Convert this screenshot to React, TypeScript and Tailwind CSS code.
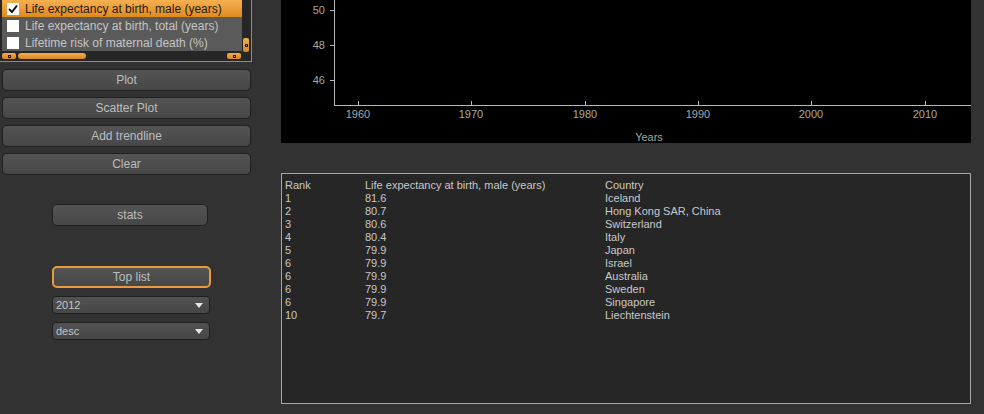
import React from 'react'

const indicators = [
  { name: 'Life expectancy at birth, male (years)', checked: true },
  { name: 'Life expectancy at birth, total (years)', checked: false },
  { name: 'Lifetime risk of maternal death (%)', checked: false },
]

const actions = ['Plot', 'Scatter Plot', 'Add trendline', 'Clear']

const ranking = [
  ['1', '81.6', 'Iceland'],
  ['2', '80.7', 'Hong Kong SAR, China'],
  ['3', '80.6', 'Switzerland'],
  ['4', '80.4', 'Italy'],
  ['5', '79.9', 'Japan'],
  ['6', '79.9', 'Israel'],
  ['6', '79.9', 'Australia'],
  ['6', '79.9', 'Sweden'],
  ['6', '79.9', 'Singapore'],
  ['10', '79.7', 'Liechtenstein'],
]

const yTicks = [
  { label: '50', y: 10 },
  { label: '48', y: 45 },
  { label: '46', y: 80 },
]

const xTicks = [
  { label: '1960', x: 77 },
  { label: '1970', x: 190 },
  { label: '1980', x: 304 },
  { label: '1990', x: 417 },
  { label: '2000', x: 530 },
  { label: '2010', x: 644 },
]

function Grip({ className }: { className: string }) {
  return (
    <div className={`flex items-center justify-center rounded-[2px] bg-gradient-to-b from-[#f4ad4c] to-[#d9861c] ${className}`}>
      <div className="h-[3px] w-[3px] border border-[#1a1a1a]" />
    </div>
  )
}

function Button({ label, className = '' }: { label: string; className?: string }) {
  return (
    <button className={`flex h-[22px] items-center justify-center rounded-[5px] border border-[#1f1f1f] bg-gradient-to-b from-[#545454] to-[#474747] text-[12px] text-[#bdbdbd] ${className}`}>
      {label}
    </button>
  )
}

function Combo({ value }: { value: string }) {
  return (
    <div className="flex h-[18px] w-[158px] items-center justify-between rounded-[4px] border border-[#1f1f1f] bg-gradient-to-b from-[#525252] to-[#464646] pl-[3px] pr-[6px] text-[11px] text-[#c4c4c4]">
      <span>{value}</span>
      <svg width="8" height="5" viewBox="0 0 8 5">
        <path d="M0 0 L8 0 L4 5 Z" fill="#e6e6e6" />
      </svg>
    </div>
  )
}

export default function App() {
  return (
    <div
      className="flex h-[414px] w-[984px] overflow-hidden bg-[#323232]"
      style={{ fontFamily: '"Liberation Sans", Arial, sans-serif' }}
    >
      {/* left controls */}
      <div className="flex w-[252px] flex-col">
        <div className="flex h-[62px] border-r border-b border-[#8c8c8c] bg-[#262626] pl-[2px] pr-[1px]">
          <div className="flex flex-1 flex-col">
            <div className="flex flex-col bg-[#5a5a5a]">
              {indicators.map((it) => (
                <div
                  key={it.name}
                  className={`flex h-[17px] items-center gap-[6px] pl-[5px] text-[12px] ${
                    it.checked
                      ? 'bg-gradient-to-b from-[#f6b050] to-[#e08a1c] text-[#1c1c1c]'
                      : 'text-[#c4c4c4]'
                  }`}
                >
                  <div className="flex h-[12px] w-[12px] items-center justify-center bg-white">
                    {it.checked && (
                      <svg width="10" height="10" viewBox="0 0 10 10">
                        <path d="M1 5 L4 8 L9 1.5" stroke="#111" strokeWidth="2" fill="none" />
                      </svg>
                    )}
                  </div>
                  <span>{it.name}</span>
                </div>
              ))}
            </div>
            <div className="mt-[2px] flex h-[6px] items-center gap-[2px] pr-[1px]">
              <Grip className="h-[6px] w-[14px]" />
              <div className="h-[6px] w-[68px] rounded-[3px] bg-gradient-to-b from-[#f4ad4c] to-[#d9861c]" />
              <div className="flex-1" />
              <Grip className="h-[6px] w-[14px]" />
            </div>
          </div>
          <div className="ml-[1px] flex w-[7px] flex-col justify-end pb-[9px]">
            <Grip className="h-[14px] w-[6px]" />
          </div>
        </div>

        <div className="mt-[7px] flex flex-col gap-[6px] pl-[2px] pr-[1px]">
          {actions.map((a) => (
            <Button key={a} label={a} />
          ))}
        </div>

        <div className="mt-[29px] flex flex-col pl-[52px]">
          <Button label="stats" className="w-[156px]" />
          <button className="mt-[40px] flex h-[22px] w-[159px] items-center justify-center rounded-[5px] border-2 border-[#e89a3c] bg-gradient-to-b from-[#545454] to-[#474747] text-[12px] text-[#bdbdbd]">
            Top list
          </button>
          <div className="mt-[8px] flex flex-col gap-[8px]">
            <Combo value="2012" />
            <Combo value="desc" />
          </div>
        </div>
      </div>

      {/* right: chart + table */}
      <div className="ml-[29px] flex w-[690px] flex-col">
        <div className="h-[143px] bg-black">
          <svg width="690" height="143" className="block">
            <line x1="53.5" y1="0" x2="53.5" y2="105.5" stroke="#b8b8b8" />
            <line x1="53" y1="105.5" x2="690" y2="105.5" stroke="#b8b8b8" />
            {yTicks.map((t) => (
              <g key={t.label}>
                <line x1="49" y1={t.y + 0.5} x2="53" y2={t.y + 0.5} stroke="#b8b8b8" />
                <text x="44" y={t.y + 4} fill="#a8a8a8" fontSize="11" textAnchor="end" fontFamily="Liberation Sans, Arial, sans-serif">
                  {t.label}
                </text>
              </g>
            ))}
            {xTicks.map((t) => (
              <g key={t.label}>
                <line x1={t.x + 0.5} y1="101" x2={t.x + 0.5} y2="105" stroke="#b8b8b8" />
                <text x={t.x} y="118" fill="#a8a8a8" fontSize="11" textAnchor="middle" fontFamily="Liberation Sans, Arial, sans-serif">
                  {t.label}
                </text>
              </g>
            ))}
            <text x="368" y="141" fill="#a8a8a8" fontSize="11" textAnchor="middle" fontFamily="Liberation Sans, Arial, sans-serif">
              Years
            </text>
          </svg>
        </div>

        <div className="mt-[30px] h-[231px] border border-[#a6a6a6] bg-[#262626] pl-[3px] pt-[5px] text-[11px] leading-[13px] text-[#c8c8c8]">
          <div className="flex">
            <span className="w-[80px]">Rank</span>
            <span className="w-[240px]">Life expectancy at birth, male (years)</span>
            <span>Country</span>
          </div>
          {ranking.map((r, i) => (
            <div key={i} className="flex">
              <span className="w-[80px]">{r[0]}</span>
              <span className="w-[240px]">{r[1]}</span>
              <span>{r[2]}</span>
            </div>
          ))}
        </div>
      </div>
    </div>
  )
}
